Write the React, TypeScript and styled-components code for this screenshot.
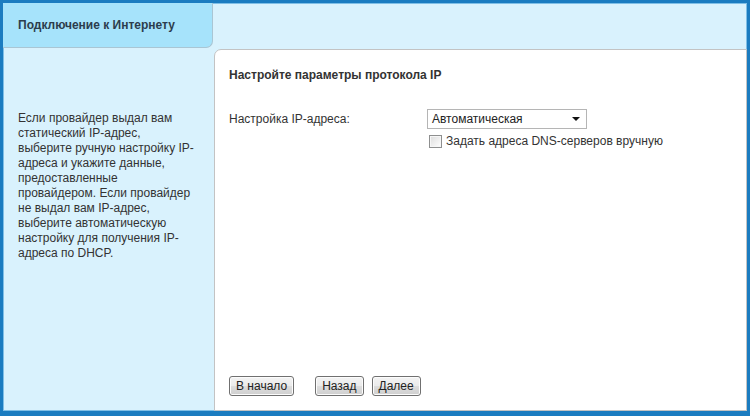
import React from "react";
import styled, { createGlobalStyle } from "styled-components";

const GlobalStyle = createGlobalStyle`
  html, body {
    margin: 0;
    padding: 0;
    background: #ffffff;
  }
  body {
    font-family: "Liberation Sans", Arial, sans-serif;
    font-size: 12px;
    color: #333333;
  }
`;

const Frame = styled.div`
  width: 750px;
  height: 416px;
  box-sizing: border-box;
  border-style: solid;
  border-color: #1b7cc0;
  border-width: 3px 3px 5px 3px;
  background: #d9f2fd;
  display: flex;
  flex-direction: column;
  box-shadow: inset 0 0 0 1px #7fbfe6;
  overflow: hidden;
`;

const Header = styled.div`
  display: flex;
  height: 45px;
  flex-shrink: 0;
`;

const Tab = styled.div`
  width: 210px;
  box-sizing: border-box;
  height: 45px;
  background: #a6e3fb;
  border-right: 1px solid #a9c6d4;
  border-bottom: 1px solid #a9c6d4;
  border-bottom-right-radius: 7px;
  display: flex;
  align-items: center;
  padding-left: 15px;
  font-weight: bold;
  font-size: 12px;
  color: #2c3d4d;
`;

const Body = styled.div`
  flex: 1;
  display: flex;
  min-height: 0;
`;

const Sidebar = styled.div`
  width: 211px;
  box-sizing: border-box;
  flex-shrink: 0;
  padding: 63px 10px 0 15px;
  line-height: 15px;
  color: #333333;
`;

const Panel = styled.div`
  flex: 1;
  background: #ffffff;
  border-top: 1px solid #c3c3c3;
  border-left: 1px solid #c3c3c3;
  border-right: 1px solid #c3c3c3;
  border-bottom: 1px solid #c3c3c3;
  border-top-left-radius: 7px;
  margin-top: 1px;
  display: flex;
  flex-direction: column;
  padding: 18px 15px 14px 14px;
`;

const Title = styled.div`
  font-weight: bold;
  line-height: 15px;
  color: #333333;
`;

const Form = styled.div`
  margin-top: 26px;
  display: grid;
  grid-template-columns: 198px auto;
  row-gap: 5px;
  align-items: center;
`;

const Label = styled.div`
  line-height: 20px;
`;

const Select = styled.div`
  width: 160px;
  height: 20px;
  box-sizing: border-box;
  border: 1px solid #b5b5b5;
  background: #ffffff;
  display: flex;
  align-items: center;
  justify-content: space-between;
  padding: 0 6px 0 4px;
  color: #222222;
`;

const Caret = styled.span`
  width: 0;
  height: 0;
  border-left: 4px solid transparent;
  border-right: 4px solid transparent;
  border-top: 4px solid #111111;
`;

const CheckRow = styled.label`
  grid-column: 2;
  display: flex;
  align-items: center;
  gap: 4px;
  padding-left: 2px;
  line-height: 14px;
`;

const Box = styled.span`
  width: 13px;
  height: 13px;
  box-sizing: border-box;
  border: 1px solid #8e8f8f;
  background: linear-gradient(135deg, #dcdcdc 0%, #f4f4f4 70%, #ffffff 100%);
  box-shadow: inset 0 0 0 1px #f6f6f6;
`;

const Spacer = styled.div`
  flex: 1;
`;

const Buttons = styled.div`
  display: flex;
  align-items: center;
`;

const Button = styled.button<{ $gap?: number }>`
  font-family: "Liberation Sans", Arial, sans-serif;
  font-size: 12px;
  color: #222222;
  height: 20px;
  padding: 0 6px;
  margin-left: ${({ $gap }) => $gap ?? 0}px;
  border: 1px solid #707070;
  border-radius: 3px;
  background: linear-gradient(#f3f3f3 0%, #ebebeb 50%, #dddddd 51%, #cfcfcf 100%);
  box-shadow: inset 0 0 0 1px #fcfcfc;
  cursor: pointer;
`;

export default function App() {
  return (
    <>
      <GlobalStyle />
      <Frame>
        <Header>
          <Tab>Подключение к Интернету</Tab>
        </Header>
        <Body>
          <Sidebar>
            Если провайдер выдал вам
            <br />
            статический IP-адрес,
            <br />
            выберите ручную настройку IP-
            <br />
            адреса и укажите данные,
            <br />
            предоставленные
            <br />
            провайдером. Если провайдер
            <br />
            не выдал вам IP-адрес,
            <br />
            выберите автоматическую
            <br />
            настройку для получения IP-
            <br />
            адреса по DHCP.
          </Sidebar>
          <Panel>
            <Title>Настройте параметры протокола IP</Title>
            <Form>
              <Label>Настройка IP-адреса:</Label>
              <Select>
                <span>Автоматическая</span>
                <Caret />
              </Select>
              <CheckRow>
                <Box />
                <span>Задать адреса DNS-серверов вручную</span>
              </CheckRow>
            </Form>
            <Spacer />
            <Buttons>
              <Button>В начало</Button>
              <Button $gap={21}>Назад</Button>
              <Button $gap={8}>Далее</Button>
            </Buttons>
          </Panel>
        </Body>
      </Frame>
    </>
  );
}
